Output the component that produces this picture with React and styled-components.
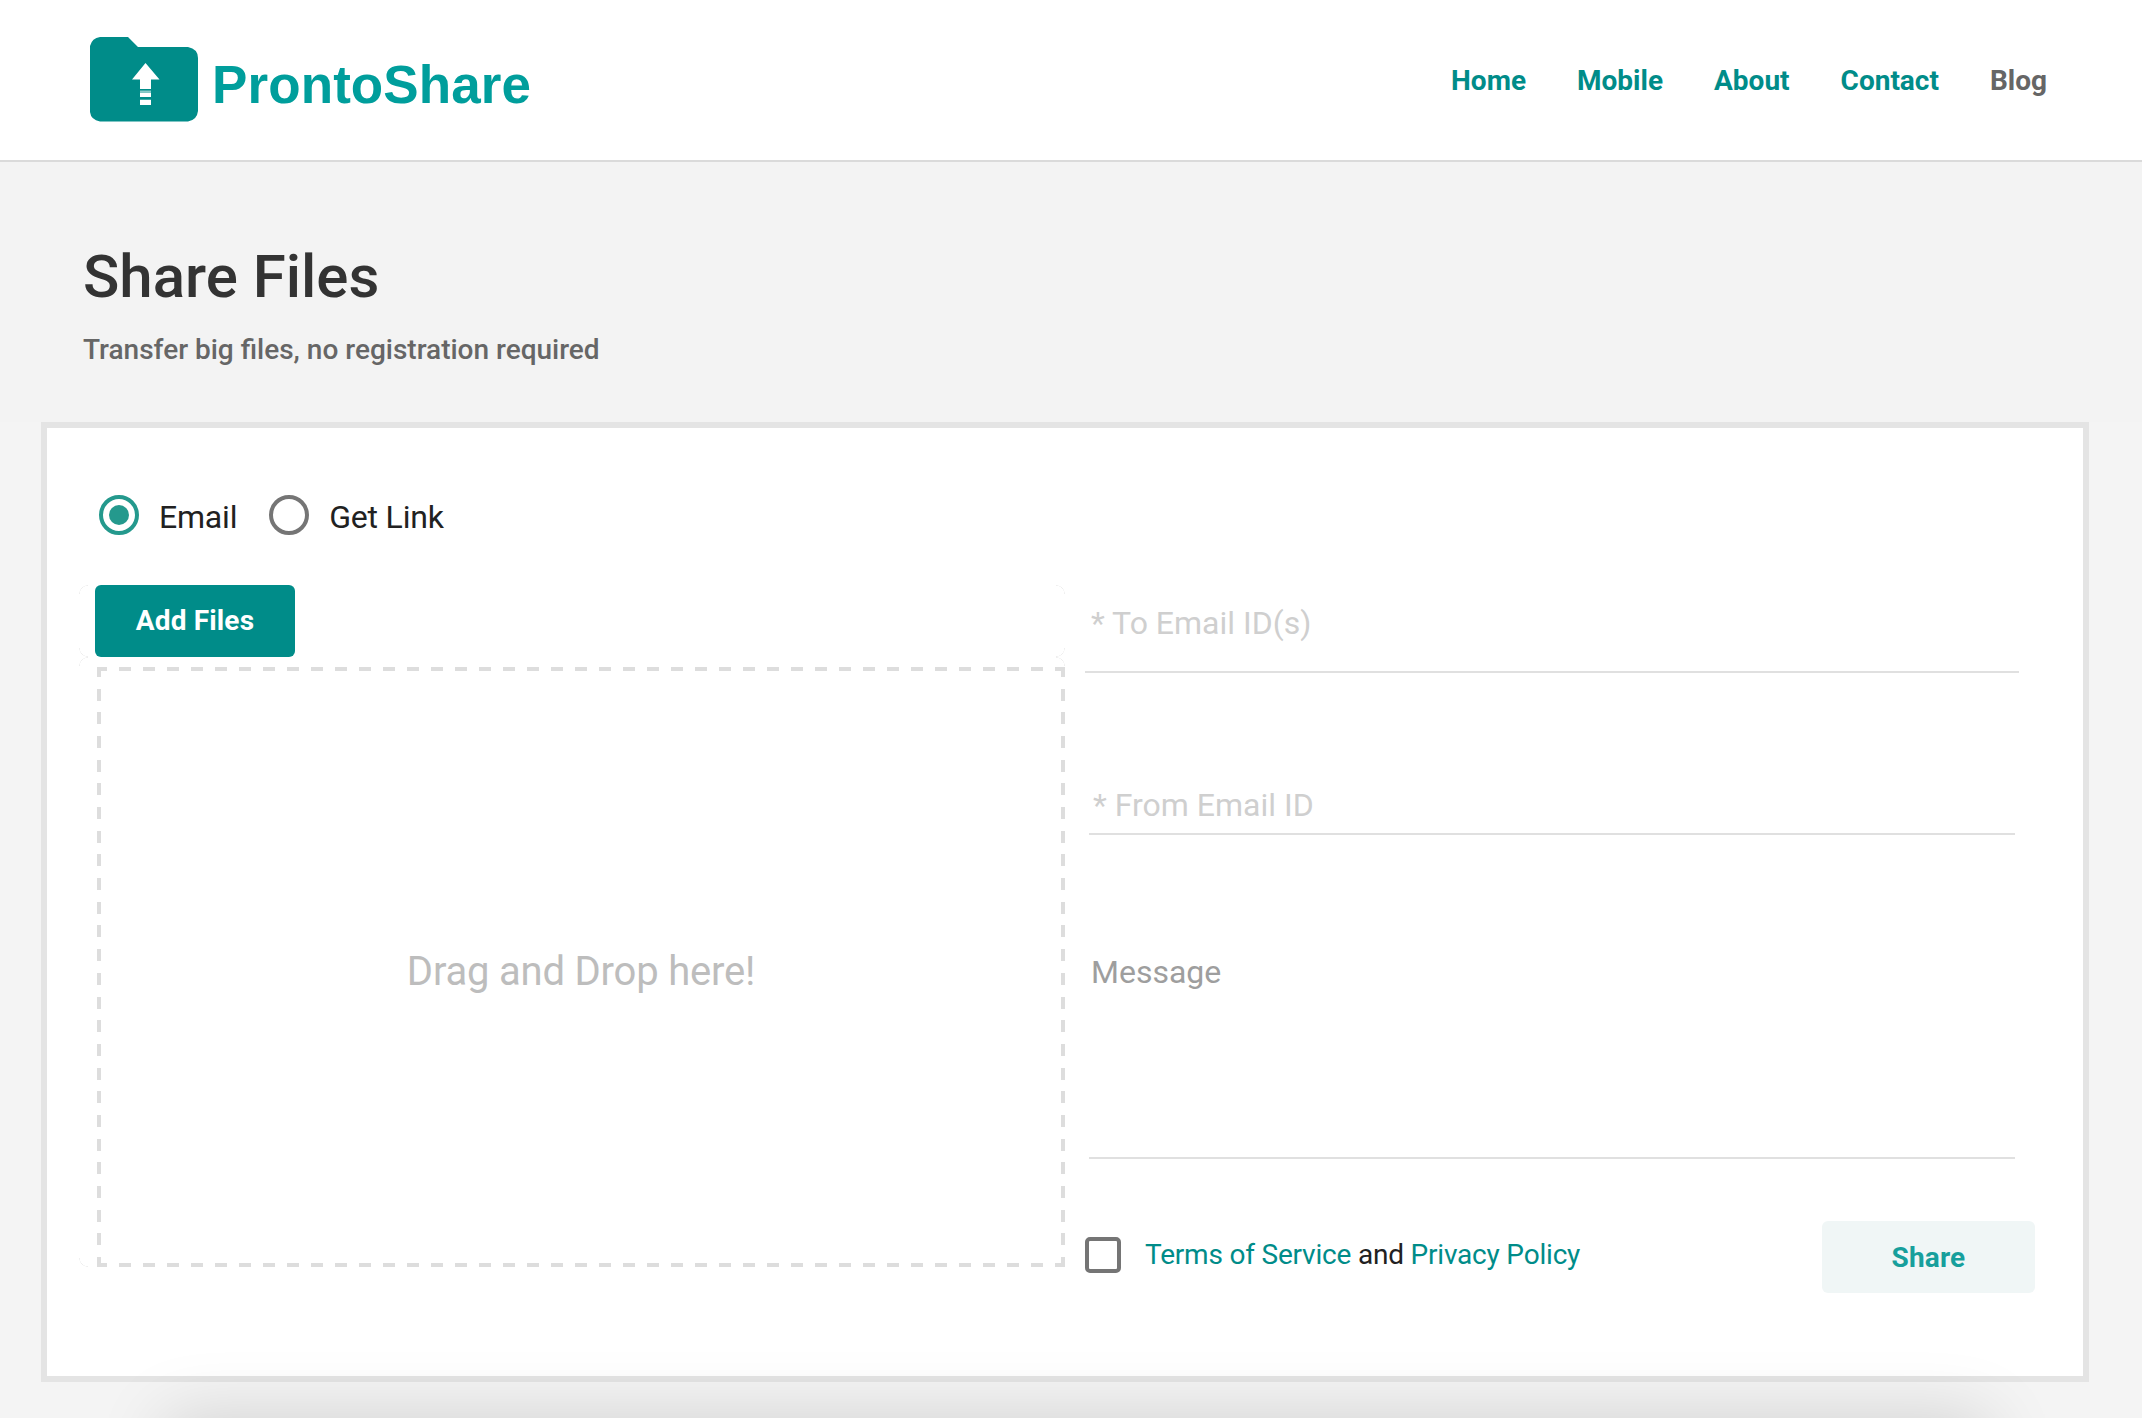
import { useState } from 'react';
import styled, { createGlobalStyle } from 'styled-components';

const GlobalStyle = createGlobalStyle`
  * {
    box-sizing: border-box;
  }
  body {
    margin: 0;
    font-family: Roboto, 'Liberation Sans', sans-serif;
    color: #212121;
    background-color: #f4f4f4;
  }
  h1,
  p {
    margin: 0;
  }
`;

const Page = styled.div`
  position: relative;
  width: 2142px;
  height: 1418px;
  overflow: hidden;
`;

const Header = styled.header`
  display: flex;
  justify-content: space-between;
  height: 162px;
  padding: 37px 95px 0 90px;
  background-color: #ffffff;
  border-bottom: 2px solid #dadada;
`;

const Logo = styled.a`
  display: flex;
  height: 86px;
  svg {
    flex-shrink: 0;
  }
`;

const LogoText = styled.span`
  flex-shrink: 0;
  margin-top: 16px;
  margin-left: 14px;
  font: bold 53px/63px 'Liberation Sans', Arial, sans-serif;
  letter-spacing: 0.1px;
  color: #009e9c;
`;

const Nav = styled.nav`
  display: flex;
  gap: 51px;
  padding-top: 27px;
`;

const NavLink = styled.a`
  font-size: 28px;
  line-height: 33px;
  font-weight: 700;
  color: ${p => (p.$muted ? '#666666' : '#008c89')};
`;

const Intro = styled.section`
  height: 260px;
  padding: 80px 83px 0;
  background-color: #f3f3f3;
`;

const Title = styled.h1`
  font-size: 60px;
  line-height: 70px;
  font-weight: 500;
  color: #333333;
`;

const Subtitle = styled.p`
  margin-top: 21px;
  font-size: 28px;
  line-height: 33px;
  font-weight: 500;
  color: #666666;
`;

const Panel = styled.main`
  width: 2048px;
  height: 960px;
  margin-left: 41px;
  padding: 67px 48px 0 32px;
  background-color: #ffffff;
  border: 6px solid #e4e4e4;
`;

const RadioGroup = styled.div`
  display: flex;
  gap: 32px;
  padding-left: 20px;
`;

const RadioLabel = styled.label`
  display: flex;
  gap: 20px;
  height: 40px;
  font-size: 32px;
  line-height: 44px;
  letter-spacing: -0.2px;
`;

const Radio = styled.input`
  appearance: none;
  display: grid;
  place-items: center;
  width: 40px;
  height: 40px;
  margin: 0;
  border: 4px solid #757575;
  border-radius: 50%;
  &:checked {
    border-color: #24998d;
  }
  &:checked::before {
    content: '';
    width: 20px;
    height: 20px;
    border-radius: 50%;
    background-color: #24998d;
  }
`;

const Columns = styled.div`
  display: flex;
  gap: 20px;
  margin-top: 50px;
`;

const Upload = styled.div`
  width: 986px;
`;

const arc = (x, y) =>
  `radial-gradient(circle at ${x} ${y}, transparent 8px, #eeeeee 8.5px, transparent 9px)`;

// only the rounded corners of the box are outlined
const Box = styled.div`
  background-image: ${arc('100%', '100%')}, ${arc('0', '100%')},
    ${arc('100%', '0')}, ${arc('0', '0')};
  background-position: left top, right top, left bottom, right bottom;
  background-size: 9px 9px;
  background-repeat: no-repeat;
`;

const ButtonBox = styled(Box)`
  height: 72px;
  padding-left: 16px;
`;

const DropBox = styled(Box)`
  height: 610px;
  padding: 10px 0 0 18px;
`;

const dashX =
  'repeating-linear-gradient(90deg, #dddddd 0 12px, transparent 12px 24px)';
const dashY =
  'repeating-linear-gradient(180deg, #dddddd 0 12px, transparent 12px 23.68px)';

const DropZone = styled.div`
  display: flex;
  align-items: center;
  justify-content: center;
  height: 600px;
  padding-top: 10px;
  font-size: 40px;
  line-height: 48px;
  letter-spacing: -0.2px;
  color: #bdbdbd;
  background-color: #ffffff;
  background-image: ${dashX}, ${dashX}, ${dashY}, ${dashY};
  background-position: -2px 0, -2px 596px, 0 -2px, 964px -2px;
  background-size: 972px 4px, 972px 4px, 4px 604px, 4px 604px;
  background-repeat: no-repeat;
`;

const Button = styled.button`
  width: ${p => p.$width};
  height: 72px;
  padding: ${p => p.$padding};
  font-family: inherit;
  font-size: 28px;
  line-height: 33px;
  font-weight: 700;
  letter-spacing: 0.15px;
  color: #ffffff;
  background-color: #008c89;
  border: none;
  border-radius: 6px;
  &:disabled {
    color: #179f9c;
    background-color: #f0f6f6;
    cursor: not-allowed;
  }
`;

const Details = styled.div`
  width: 950px;
`;

const Field = styled.div`
  display: flex;
  align-items: ${p => p.$align || 'flex-end'};
  width: ${p => (p.$wide ? '934px' : '926px')};
  height: ${p => p.$height};
  margin-left: ${p => (p.$wide ? '0' : '4px')};
  padding: ${p => p.$padding};
  font-size: 32px;
  line-height: 38px;
  color: ${p => p.$color || '#cfcfcf'};
  border-bottom: 2px solid #e0e0e0;
`;

const Footer = styled.div`
  display: flex;
  justify-content: space-between;
  margin-top: 62px;
`;

const Terms = styled.label`
  display: flex;
  gap: 24px;
  margin-top: 16px;
  font-size: 28px;
  line-height: 35px;
  letter-spacing: -0.2px;
`;

const Checkbox = styled.input`
  appearance: none;
  width: 36px;
  height: 36px;
  margin: 0;
  border: 4px solid #757575;
  border-radius: 5px;
`;

const Link = styled.a`
  color: #008c89;
`;

// bar waiting below the fold, only its shadow is seen
const BottomSheet = styled.div`
  position: absolute;
  top: 1418px;
  left: 166px;
  width: 1822px;
  height: 200px;
  box-shadow: 0 0 70px rgba(0, 0, 0, 0.15);
`;

const links = ['Home', 'Mobile', 'About', 'Contact', 'Blog'];

const FolderIcon = () => (
  <svg width="108" height="85" viewBox="0 0 108 85">
    <path
      fill="#008c89"
      d="M10 0H38L48 10H98Q108 12 108 21V74Q107 83 98 84.5H10Q1 83 0 75V9Q2 1 10 0Z"
    />
    <path fill="#fff" d="M55.5 26L69.5 42.5H61V52H50V42.5H42Z" />
    <path fill="#8ccbc9" d="M50 53.5H61V55H50Z" />
    <path fill="#fff" d="M50 55.5H61V60H50ZM50 62.7H61V68H50Z" />
  </svg>
);

const App = () => {
  const [mode, setMode] = useState('Email');

  return (
    <Page>
      <GlobalStyle />
      <Header>
        <Logo>
          <FolderIcon />
          <LogoText>ProntoShare</LogoText>
        </Logo>
        <Nav>
          {links.map(link => (
            <NavLink key={link} $muted={link === 'Blog'}>
              {link}
            </NavLink>
          ))}
        </Nav>
      </Header>
      <Intro>
        <Title>Share Files</Title>
        <Subtitle>Transfer big files, no registration required</Subtitle>
      </Intro>
      <Panel>
        <RadioGroup>
          {['Email', 'Get Link'].map(item => (
            <RadioLabel key={item}>
              <Radio
                type="radio"
                name="mode"
                checked={mode === item}
                onChange={() => setMode(item)}
              />
              {item}
            </RadioLabel>
          ))}
        </RadioGroup>
        <Columns>
          <Upload>
            <ButtonBox>
              <Button type="button" $width="200px" $padding="0 0 2px">
                Add Files
              </Button>
            </ButtonBox>
            <DropBox>
              <DropZone>Drag and Drop here!</DropZone>
            </DropBox>
          </Upload>
          <Details>
            <Field $wide $height="88px" $padding="0 0 29px 6px">
              * To Email ID(s)
            </Field>
            <Field $height="162px" $padding="0 0 9px 4px">
              * From Email ID
            </Field>
            <Field
              $height="324px"
              $align="flex-start"
              $padding="118px 0 0 2px"
              $color="#9e9e9e"
            >
              Message
            </Field>
            <Footer>
              <Terms>
                <Checkbox type="checkbox" />
                <span>
                  <Link>Terms of Service</Link> and <Link>Privacy Policy</Link>
                </span>
              </Terms>
              <Button type="submit" disabled $width="213px" $padding="0">
                Share
              </Button>
            </Footer>
          </Details>
        </Columns>
      </Panel>
      <BottomSheet />
    </Page>
  );
};

export default App;
